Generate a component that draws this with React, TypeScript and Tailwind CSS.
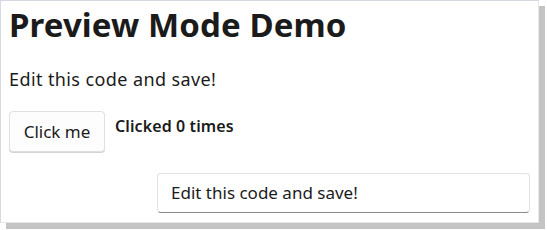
export default function App() {
  return (
    <div className="h-[230px] w-[547px] bg-white">
      <div
        className="flex h-[223px] w-[539px] flex-col border-l border-t border-[#d6d8e6] bg-white px-2 pt-1 shadow-[6px_6px_0_0_#c4c4c4] border-r border-b border-r-[#e8e8e8] border-b-[#e8e8e8]"
        style={{ fontFamily: '"Noto Sans", "Open Sans", sans-serif' }}
      >
        <h1 className="text-[33px] font-bold leading-[40px] tracking-[0.1px] text-[#1b1b1b]">
          Preview Mode Demo
        </h1>
        <p className="mt-[22px] text-[18px] leading-[24px] tracking-[0.4px] text-[#1b1b1b]">
          Edit this code and save!
        </p>
        <div className="mt-[20px] flex items-start gap-[10px]">
          <button
            type="button"
            className="h-[41px] w-[96px] rounded-[4px] border border-[#e0e0e0] bg-[#fdfdfd] text-[17px] text-[#1b1b1b] shadow-[0_1px_0_0_#d4d4d4]"
          >
            Click me
          </button>
          <span className="mt-[3px] text-[16px] font-semibold tracking-[0.1px] text-[#1b1b1b]">
            Clicked 0 times
          </span>
        </div>
        <div className="mt-[21px] flex justify-end">
          <div className="flex h-[40px] w-[373px] items-center rounded-[4px] border border-[#e3e3e3] border-b-[#8a8a8a] bg-white px-[13px] text-[17px] text-[#1b1b1b]">
            Edit this code and save!
          </div>
        </div>
      </div>
    </div>
  );
}
